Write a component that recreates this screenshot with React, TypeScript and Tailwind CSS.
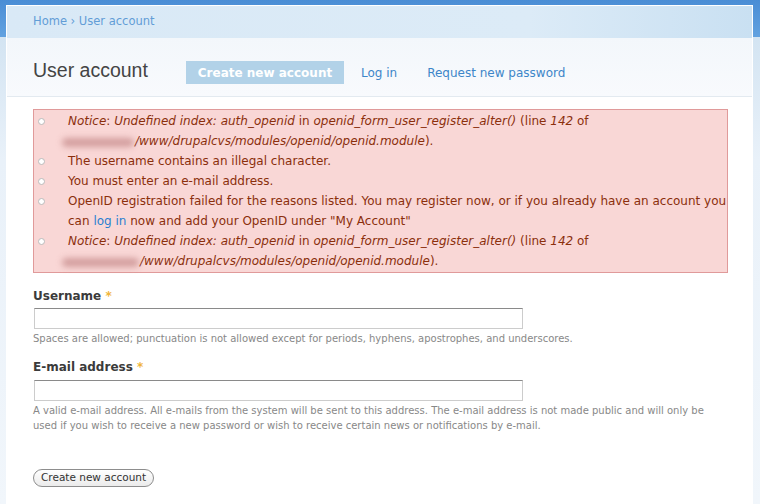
import React from "react";

const V = { fontFamily: '"DejaVu Sans", Verdana, sans-serif' } as const;

function Bullet() {
  return (
    <span className="mt-[7px] mr-[23px] ml-[4px] block h-[7px] w-[7px] shrink-0 rounded-full border border-[#bbbbbb] bg-white" />
  );
}

function Blur({ w }: { w: number }) {
  return (
    <span className="relative inline-block h-[14px] align-middle" style={{ width: w }}>
      <span className="absolute -left-[6px] right-[1px] top-[3px] h-[9px] rounded-full bg-[#c68b8b] opacity-75 blur-[3px]" />
    </span>
  );
}

export default function App() {
  return (
    <div
      className="flex h-[504px] w-[760px] flex-col overflow-hidden bg-[linear-gradient(to_bottom,#4a8dd5_0px,#62a2e0_37px,#d3e4f2_37px,#e9f1f9_160px,#f1f6fb_100%)]"
      style={V}
    >
      <div className="ml-[6px] mr-[7px] mt-[5px] flex flex-1 flex-col border-l border-r border-t border-white">
        <div className="flex h-[32px] items-center bg-[linear-gradient(to_right,#d9e9f6,#dcebf7_70%,#c9e0f2)] pl-[26px] text-[11.5px] text-[#629dd6]">
          Home › User account
        </div>
        <div className="flex h-[59px] items-start border-b border-[#e3eaf0] bg-[linear-gradient(to_bottom,#f3f7fb,#f8fafd)] pl-[26px] pt-[23px]">
          <h1
            className="mt-[-3px] w-[153px] text-[19.5px] leading-[24px] text-[#444444]"
            style={{ fontFamily: '"Liberation Sans", Arial, sans-serif' }}
          >
            User account
          </h1>
          <span className="flex h-[23px] w-[158px] items-center justify-center bg-[#b2d2e8] text-[12px] font-bold text-white">
            Create new account
          </span>
          <span className="ml-[17px] flex h-[23px] items-center text-[12px] text-[#3d86c9]">Log in</span>
          <span className="ml-[30px] flex h-[23px] items-center text-[12px] text-[#3d86c9]">Request new password</span>
        </div>
        <div className="flex-1 bg-white pl-[26px] pr-[24px] pt-[12px]">
          <div className="border border-[#e09a9a] bg-[#f9d7d6] py-[1px] text-[12px] leading-[20px] text-[#8b2f0c]">
            <ul>
              <li className="flex">
                <Bullet />
                <div>
                  <i>Notice</i>: <i>Undefined index: auth_openid</i> in <i>openid_form_user_register_alter()</i> (line <i>142</i> of
                  <br />
                  <Blur w={67} />
                  <i>/www/drupalcvs/modules/openid/openid.module</i>).
                </div>
              </li>
              <li className="flex">
                <Bullet />
                <div>The username contains an illegal character.</div>
              </li>
              <li className="flex">
                <Bullet />
                <div>You must enter an e-mail address.</div>
              </li>
              <li className="flex">
                <Bullet />
                <div>
                  OpenID registration failed for the reasons listed. You may register now, or if you already have an account you can <span className="text-[#2b7fd0]">log in</span> now and add your OpenID under "My Account"
                </div>
              </li>
              <li className="flex">
                <Bullet />
                <div>
                  <i>Notice</i>: <i>Undefined index: auth_openid</i> in <i>openid_form_user_register_alter()</i> (line <i>142</i> of
                  <br />
                  <Blur w={72} />
                  <i>/www/drupalcvs/modules/openid/openid.module</i>).
                </div>
              </li>
            </ul>
          </div>

          <div className="mt-[14px]">
            <label className="block text-[12px] font-bold leading-[18px] text-[#3b3b3b]">
              Username <span className="text-[#f0b43a]">*</span>
            </label>
            <div className="ml-[1px] mt-[3px] h-[21px] w-[489px] border border-[#cccccc] border-t-[#8a8a8a] bg-white" />
            <div className="mt-[2px] text-[10px] leading-[15px] text-[#888888]">
              Spaces are allowed; punctuation is not allowed except for periods, hyphens, apostrophes, and underscores.
            </div>
          </div>

          <div className="mt-[12px]">
            <label className="block text-[12px] font-bold leading-[18px] text-[#3b3b3b]">
              E-mail address <span className="text-[#f0b43a]">*</span>
            </label>
            <div className="ml-[1px] mt-[4px] h-[21px] w-[489px] border border-[#cccccc] border-t-[#8a8a8a] bg-white" />
            <div className="mt-[2px] text-[10px] leading-[15px] text-[#888888]">
              A valid e-mail address. All e-mails from the system will be sent to this address. The e-mail address is not made public and will only be used if you wish to receive a new password or wish to receive certain news or notifications by e-mail.
            </div>
          </div>

          <button className="mt-[36px] flex h-[18px] items-center rounded-full border border-[#8d8d8d] bg-[linear-gradient(to_bottom,#ffffff,#ebebeb)] px-[7px] text-[10.5px] text-[#333333]">
            Create new account
          </button>
        </div>
      </div>
    </div>
  );
}
